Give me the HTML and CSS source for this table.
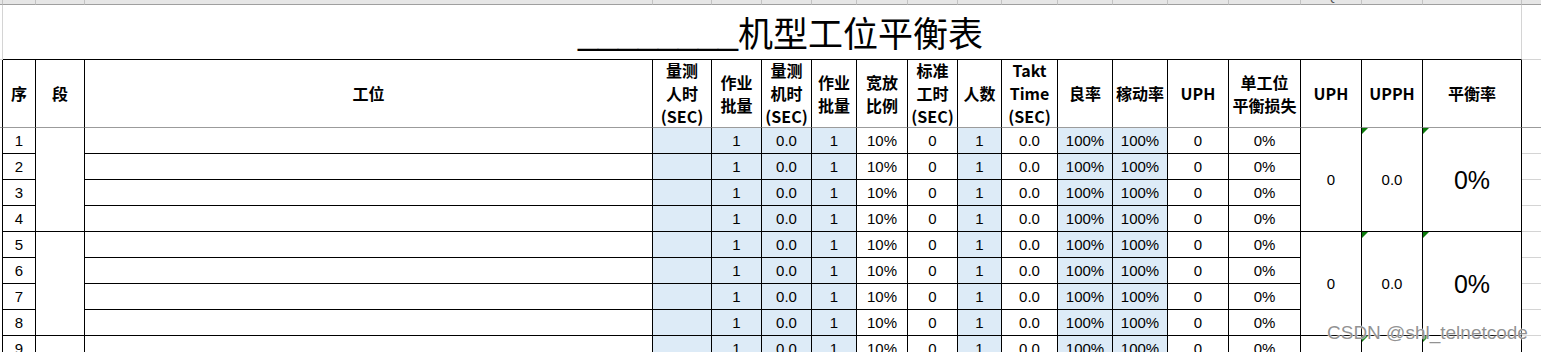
FILE: index.html
```html
<!DOCTYPE html>
<html lang="zh-CN">
<head>
<meta charset="utf-8">
<title>机型工位平衡表</title>
<link rel="stylesheet" href="styles.css">
</head>
<body>
<div class="sheet">
  <div class="cb"></div>
  <div class="cb"><span>B</span></div>
  <div class="cb"><span>C</span></div>
  <div class="cb"><span>D</span></div>
  <div class="cb"><span>E</span></div>
  <div class="cb"><span>F</span></div>
  <div class="cb"><span>G</span></div>
  <div class="cb"><span>H</span></div>
  <div class="cb"><span>I</span></div>
  <div class="cb"><span>J</span></div>
  <div class="cb"><span>K</span></div>
  <div class="cb"><span>L</span></div>
  <div class="cb"><span>M</span></div>
  <div class="cb"><span>N</span></div>
  <div class="cb"><span>O</span></div>
  <div class="cb"><span>P</span></div>
  <div class="cb"><span>Q</span></div>
  <div class="cb"><span>R</span></div>
  <div class="cb"><span>S</span></div>
  <div class="cb cb-last"></div>

  <div class="ta"></div>
  <div class="title"><span class="blank">________</span><span class="title-text">机型工位平衡表</span></div>
  <div class="tt"></div>

  <div class="ha"></div>
  <div class="h">序</div>
  <div class="h">段</div>
  <div class="h">工位</div>
  <div class="h">量测<br>人时<br>(SEC)</div>
  <div class="h">作业<br>批量</div>
  <div class="h">量测<br>机时<br>(SEC)</div>
  <div class="h">作业<br>批量</div>
  <div class="h">宽放<br>比例</div>
  <div class="h">标准<br>工时<br>(SEC)</div>
  <div class="h">人数</div>
  <div class="h">Takt<br>Time<br>(SEC)</div>
  <div class="h">良率</div>
  <div class="h">稼动率</div>
  <div class="h">UPH</div>
  <div class="h">单工位<br>平衡损失</div>
  <div class="h">UPH</div>
  <div class="h">UPPH</div>
  <div class="h">平衡率</div>
  <div class="ht"></div>

  <!-- row 1 -->
  <div class="a"></div><div class="c">1</div><div class="c seg"></div><div class="c"></div>
  <div class="c b"></div><div class="c b">1</div><div class="c b">0.0</div><div class="c b">1</div><div class="c">10%</div><div class="c">0</div><div class="c b">1</div><div class="c">0.0</div><div class="c b">100%</div><div class="c b">100%</div><div class="c">0</div><div class="c">0%</div>
  <div class="c m">0</div><div class="c m mark">0.0</div><div class="c m mark big">0%</div><div class="t"></div>
  <!-- row 2 -->
  <div class="a"></div><div class="c">2</div><div class="c"></div>
  <div class="c b"></div><div class="c b">1</div><div class="c b">0.0</div><div class="c b">1</div><div class="c">10%</div><div class="c">0</div><div class="c b">1</div><div class="c">0.0</div><div class="c b">100%</div><div class="c b">100%</div><div class="c">0</div><div class="c">0%</div>
  <div class="t"></div>
  <!-- row 3 -->
  <div class="a"></div><div class="c">3</div><div class="c"></div>
  <div class="c b"></div><div class="c b">1</div><div class="c b">0.0</div><div class="c b">1</div><div class="c">10%</div><div class="c">0</div><div class="c b">1</div><div class="c">0.0</div><div class="c b">100%</div><div class="c b">100%</div><div class="c">0</div><div class="c">0%</div>
  <div class="t"></div>
  <!-- row 4 -->
  <div class="a"></div><div class="c">4</div><div class="c"></div>
  <div class="c b"></div><div class="c b">1</div><div class="c b">0.0</div><div class="c b">1</div><div class="c">10%</div><div class="c">0</div><div class="c b">1</div><div class="c">0.0</div><div class="c b">100%</div><div class="c b">100%</div><div class="c">0</div><div class="c">0%</div>
  <div class="t"></div>

  <!-- row 5 -->
  <div class="a"></div><div class="c">5</div><div class="c seg"></div><div class="c"></div>
  <div class="c b"></div><div class="c b">1</div><div class="c b">0.0</div><div class="c b">1</div><div class="c">10%</div><div class="c">0</div><div class="c b">1</div><div class="c">0.0</div><div class="c b">100%</div><div class="c b">100%</div><div class="c">0</div><div class="c">0%</div>
  <div class="c m">0</div><div class="c m mark">0.0</div><div class="c m mark big">0%</div><div class="t"></div>
  <!-- row 6 -->
  <div class="a"></div><div class="c">6</div><div class="c"></div>
  <div class="c b"></div><div class="c b">1</div><div class="c b">0.0</div><div class="c b">1</div><div class="c">10%</div><div class="c">0</div><div class="c b">1</div><div class="c">0.0</div><div class="c b">100%</div><div class="c b">100%</div><div class="c">0</div><div class="c">0%</div>
  <div class="t"></div>
  <!-- row 7 -->
  <div class="a"></div><div class="c">7</div><div class="c"></div>
  <div class="c b"></div><div class="c b">1</div><div class="c b">0.0</div><div class="c b">1</div><div class="c">10%</div><div class="c">0</div><div class="c b">1</div><div class="c">0.0</div><div class="c b">100%</div><div class="c b">100%</div><div class="c">0</div><div class="c">0%</div>
  <div class="t"></div>
  <!-- row 8 -->
  <div class="a"></div><div class="c">8</div><div class="c"></div>
  <div class="c b"></div><div class="c b">1</div><div class="c b">0.0</div><div class="c b">1</div><div class="c">10%</div><div class="c">0</div><div class="c b">1</div><div class="c">0.0</div><div class="c b">100%</div><div class="c b">100%</div><div class="c">0</div><div class="c">0%</div>
  <div class="t"></div>

  <!-- row 9 -->
  <div class="a"></div><div class="c">9</div><div class="c seg"></div><div class="c"></div>
  <div class="c b"></div><div class="c b">1</div><div class="c b">0.0</div><div class="c b">1</div><div class="c">10%</div><div class="c">0</div><div class="c b">1</div><div class="c">0.0</div><div class="c b">100%</div><div class="c b">100%</div><div class="c">0</div><div class="c">0%</div>
  <div class="c m">0</div><div class="c m mark">0.0</div><div class="c m mark big">0%</div><div class="t"></div>
  <!-- row 10 -->
  <div class="a"></div><div class="c">10</div><div class="c"></div>
  <div class="c b"></div><div class="c b">1</div><div class="c b">0.0</div><div class="c b">1</div><div class="c">10%</div><div class="c">0</div><div class="c b">1</div><div class="c">0.0</div><div class="c b">100%</div><div class="c b">100%</div><div class="c">0</div><div class="c">0%</div>
  <div class="t"></div>
</div>
<div class="watermark">CSDN @shl_telnetcode</div>
</body>
</html>
```

FILE: styles.css
```css
html, body {
  margin: 0;
  padding: 0;
  overflow: hidden;
  background: #ffffff;
}
body {
  position: relative;
  width: 1541px;
  height: 352px;
  font-family: "Liberation Sans", Arial, sans-serif;
  color: #000;
}
.sheet {
  display: grid;
  grid-template-columns: 3px 33px 49px 568px 59px 50px 50px 45px 51px 50px 44px 56px 55px 55px 61px 72px 61px 61px 99px 1fr;
  grid-template-rows: 5px 55px 68px repeat(10, 26px);
}
.sheet > div {
  box-sizing: border-box;
}

/* column letter bar */
.cb {
  background: #e6e6e6;
  border-right: 1px solid #c3c3c3;
  border-bottom: 1px solid #9f9f9f;
  overflow: hidden;
  text-align: center;
  font-size: 13px;
  color: #555;
}
.cb span {
  display: block;
  line-height: 14px;
  margin-top: -11px;
}
.cb-last { border-right: none; }

/* title row */
.ta {
  border-right: 1px solid #d4d4d4;
  border-bottom: 1px solid #d4d4d4;
}
.title {
  grid-column: span 18;
  border-right: 1px solid #d4d4d4;
  border-bottom: 1px solid #000;
  display: flex;
  align-items: center;
  justify-content: center;
  padding-left: 37px;
  font-size: 35px;
  line-height: 40px;
  white-space: nowrap;
}
.blank {
  font-family: "Liberation Sans", Arial, sans-serif;
  font-size: 36px;
}
.title-text {
  font-family: "Noto Sans CJK SC", "Microsoft YaHei", sans-serif;
  font-weight: 400;
}
.tt {
  border-bottom: 1px solid #d4d4d4;
}

/* header row */
.ha {
  border-right: 1px solid #000;
  border-bottom: 1px solid #9b9b9b;
}
.h {
  border-right: 1px solid #000;
  border-bottom: 1px solid #9b9b9b;
  display: flex;
  align-items: center;
  justify-content: center;
  text-align: center;
  font-family: "Noto Sans CJK SC", "Microsoft YaHei", sans-serif;
  font-weight: 700;
  font-size: 16px;
  line-height: 23px;
  white-space: nowrap;
}
.ht {
  border-bottom: 1px solid #9b9b9b;
}

/* data rows */
.a {
  border-right: 1px solid #000;
}
.c {
  border-right: 1px solid #000;
  border-bottom: 1px solid #000;
  display: flex;
  align-items: center;
  justify-content: center;
  font-size: 15px;
  line-height: 18px;
  white-space: nowrap;
}
.b {
  background: #ddebf7;
}
.seg {
  grid-row: span 4;
}
.m {
  grid-row: span 4;
  position: relative;
}
.big {
  font-size: 25px;
  line-height: 28px;
}
.mark::before {
  content: "";
  position: absolute;
  left: 0;
  top: 0;
  width: 0;
  height: 0;
  border-top: 6px solid #0b7a0b;
  border-right: 6px solid transparent;
}
.t {
  border-bottom: 1px solid #d4d4d4;
}

.watermark {
  position: absolute;
  left: 1327px;
  top: 321px;
  font-family: "Liberation Sans", Arial, sans-serif;
  font-size: 19px;
  line-height: 24px;
  color: rgba(110, 110, 110, 0.75);
  text-shadow: 0 0 1px #fff, 0 0 2px #fff;
  white-space: nowrap;
}
```
